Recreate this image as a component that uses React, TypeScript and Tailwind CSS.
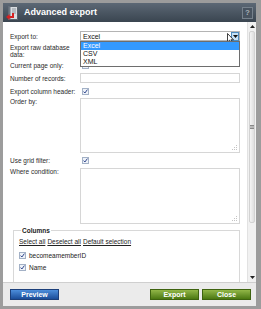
import React from "react";

// Advanced export dialog — small-scale replica of the CMS modal.

function Check() {
  return (
    <span className="flex h-[7px] w-[7px] items-center justify-center border border-[#a3b1c6] bg-[#eef2f8]">
      <svg width="5" height="5" viewBox="0 0 5 5">
        <path d="M0.6 2.6 L1.9 4 L4.4 0.6" fill="none" stroke="#30468c" strokeWidth="1" />
      </svg>
    </span>
  );
}

function Grip() {
  return (
    <svg className="absolute bottom-[1px] right-[1px]" width="6" height="6" viewBox="0 0 6 6">
      <rect x="4" y="0" width="1" height="1" fill="#c4c4c4" />
      <rect x="2" y="2" width="1" height="1" fill="#c4c4c4" />
      <rect x="4" y="2" width="1" height="1" fill="#c4c4c4" />
      <rect x="0" y="4" width="1" height="1" fill="#c4c4c4" />
      <rect x="2" y="4" width="1" height="1" fill="#c4c4c4" />
      <rect x="4" y="4" width="1" height="1" fill="#c4c4c4" />
    </svg>
  );
}

function Area({ h }: { h: string }) {
  return <div className={`relative w-[160px] border border-[#d6d6d6] bg-white ${h}`}><Grip /></div>;
}

function Label({ children, top }: { children: React.ReactNode; top?: boolean }) {
  return (
    <div className={`flex w-[70px] shrink-0 text-[6.5px] leading-[7px] text-[#2b2b2b] ${top ? "items-start" : "items-center"}`}>
      <span>{children}</span>
    </div>
  );
}

export default function App() {
  return (
    <div className="h-[309px] w-[261px] bg-[#9c9c9c] pb-[3px] pl-[3px] pr-[5px] pt-[3px] font-['Liberation_Sans',Arial,sans-serif]">
      <div className="flex h-full flex-col">
        {/* title bar */}
        <div className="flex h-[19px] shrink-0 items-center bg-gradient-to-b from-[#5c6875] to-[#3a4550]">
          <svg className="ml-[3px]" width="12" height="14" viewBox="0 0 12 14">
            <rect x="2.5" y="0.5" width="9" height="13" rx="0.5" fill="#d9dde1" stroke="#59636d" />
            <rect x="2.5" y="0.5" width="2" height="13" fill="#6f7983" />
            <line x1="6" y1="3" x2="10" y2="3" stroke="#8b949c" />
            <line x1="6" y1="5" x2="10" y2="5" stroke="#8b949c" />
            <line x1="6" y1="7" x2="10" y2="7" stroke="#8b949c" />
            <path d="M6 7 L6 10 L3.5 10 L3.5 8 L0 11 L3.5 14 L3.5 12 L8 12 L8 7 Z" fill="#d52222" />
          </svg>
          <span className="ml-[6px] text-[9px] font-bold leading-none text-white">Advanced export</span>
          <span className="ml-auto mr-[3px] flex h-[12px] w-[11px] items-center justify-center border border-[#76818c] bg-[#48535f] text-[8px] font-bold leading-none text-[#a6afb8]">
            ?
          </span>
        </div>

        {/* body */}
        <div className="flex h-[260px] shrink-0 overflow-hidden bg-white">
          <div className="relative flex w-[244px] flex-col pl-[7px] pt-[9px]">
            {/* Export to */}
            <div className="flex h-[10px]">
              <Label>Export to:</Label>
              <div className="relative z-10 w-[160px]">
                <div className="flex h-[10px] items-center border border-[#b4b4b4] bg-white pl-[2px] text-[7px] leading-none text-[#111]">
                  Excel
                  <span className="ml-auto flex h-[9px] w-[8px] items-center justify-center border border-[#4d8cc0] bg-[#c6e1f5]">
                    <svg width="5" height="3" viewBox="0 0 5 3"><path d="M0 0 L5 0 L2.5 3 Z" fill="#111" /></svg>
                  </span>
                </div>
                <svg className="absolute left-[147px] top-[2px]" width="7" height="11" viewBox="0 0 7 11">
                  <path d="M0.5 0.5 L0.5 9 L2.5 7.2 L4 10.5 L5.3 9.9 L3.9 6.8 L6.5 6.8 Z" fill="#fff" stroke="#111" strokeWidth="0.8" />
                </svg>
                <div className="absolute left-0 top-[10px] w-[160px] border border-[#6e6e6e] bg-white text-[7px] leading-[8px] text-[#111]">
                  <div className="bg-[#3399ff] pl-[2px] text-white">Excel</div>
                  <div className="pl-[2px]">CSV</div>
                  <div className="pl-[2px]">XML</div>
                </div>
              </div>
            </div>

            <div className="mt-[3px] flex h-[14px]">
              <Label top>Export raw database data:</Label>
              <div className="flex items-center pl-[2px]"><Check /></div>
            </div>

            <div className="mt-[4px] flex h-[9px]">
              <Label>Current page only:</Label>
              <div className="flex items-center pl-[2px]"><Check /></div>
            </div>

            <div className="mt-[4px] flex h-[10px]">
              <Label>Number of records:</Label>
              <div className="h-[10px] w-[160px] border border-[#d6d6d6]" />
            </div>

            <div className="mt-[5px] flex h-[9px]">
              <Label>Export column header:</Label>
              <div className="flex items-center pl-[2px]"><Check /></div>
            </div>

            <div className="mt-[3px] flex">
              <Label top>Order by:</Label>
              <Area h="h-[55px]" />
            </div>

            <div className="mt-[4px] flex h-[8px]">
              <Label>Use grid filter:</Label>
              <div className="flex items-center pl-[2px]"><Check /></div>
            </div>

            <div className="mt-[4px] flex">
              <Label top>Where condition:</Label>
              <Area h="h-[56px]" />
            </div>

            <fieldset className="ml-[3px] mt-[3px] w-[227px] shrink-0 border border-[#d8d8d8] pb-[30px] pl-[5px]">
              <legend className="ml-[2px] px-[1px] text-[6.5px] font-bold leading-[7px] text-[#222]">Columns</legend>
              <div className="mt-[4px] flex gap-[2px] text-[6.5px] leading-[7px] text-[#222] underline">
                <span>Select all</span>
                <span>Deselect all</span>
                <span>Default selection</span>
              </div>
              <div className="mt-[7px] flex h-[7px] items-center gap-[3px] text-[6.5px] text-[#222]">
                <Check />
                <span>becomeamemberID</span>
              </div>
              <div className="mt-[5px] flex h-[7px] items-center gap-[3px] text-[6.5px] text-[#222]">
                <Check />
                <span>Name</span>
              </div>
            </fieldset>
          </div>

          {/* scrollbar */}
          <div className="ml-auto flex w-[9px] flex-col border-l border-[#e2e2e2] bg-[#f1f1f1]">
            <div className="flex h-[9px] items-center justify-center">
              <svg width="5" height="3" viewBox="0 0 5 3"><path d="M0 3 L5 3 L2.5 0 Z" fill="#222" /></svg>
            </div>
            <div className="mx-[1px] flex h-[192px] items-center justify-center rounded-[2px] border border-[#d2d2d2] bg-gradient-to-r from-[#f4f4f4] to-[#dedede]">
              <svg width="4" height="4" viewBox="0 0 4 4">
                <line x1="0" y1="0.5" x2="4" y2="0.5" stroke="#888" />
                <line x1="0" y1="2" x2="4" y2="2" stroke="#888" />
                <line x1="0" y1="3.5" x2="4" y2="3.5" stroke="#888" />
              </svg>
            </div>
            <div className="mt-auto flex h-[9px] items-center justify-center">
              <svg width="5" height="3" viewBox="0 0 5 3"><path d="M0 0 L5 0 L2.5 3 Z" fill="#222" /></svg>
            </div>
          </div>
        </div>

        {/* footer */}
        <div className="flex h-[24px] shrink-0 items-center border-t border-[#cfcfcf] bg-[#ebebeb] pl-[7px] pr-[5px]">
          <button className="h-[11px] w-[49px] border border-[#1c3f7a] bg-gradient-to-b from-[#4d8edb] to-[#1b4d99] text-[7px] font-bold leading-none text-white">
            Preview
          </button>
          <button className="ml-auto h-[11px] w-[49px] border border-[#3e6310] bg-gradient-to-b from-[#92b747] to-[#4b7810] text-[7px] font-bold leading-none text-white">
            Export
          </button>
          <button className="ml-[3px] h-[11px] w-[49px] border border-[#3e6310] bg-gradient-to-b from-[#92b747] to-[#4b7810] text-[7px] font-bold leading-none text-white">
            Close
          </button>
        </div>
      </div>
    </div>
  );
}
